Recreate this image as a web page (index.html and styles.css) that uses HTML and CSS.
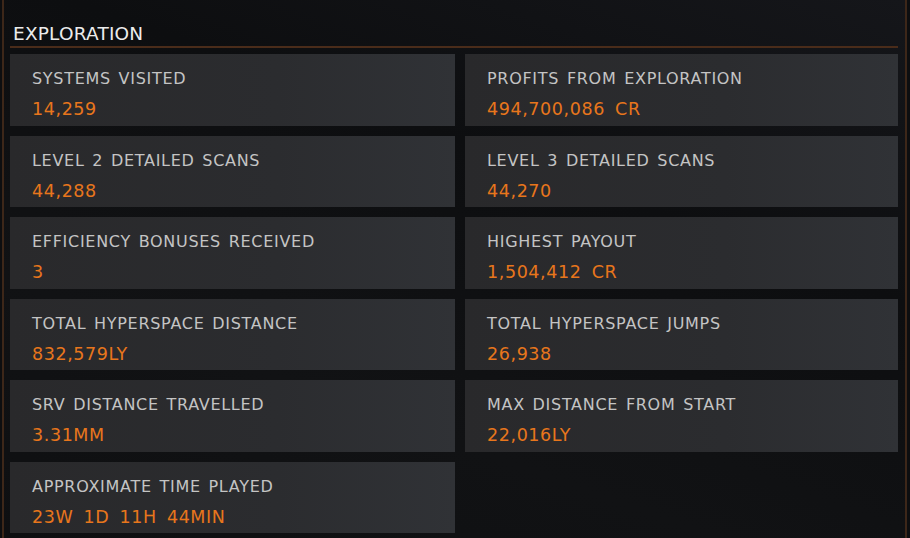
FILE: index.html
```html
<!DOCTYPE html>
<html>
<head>
<meta charset="utf-8">
<link rel="stylesheet" href="styles.css">
</head>
<body>
<div class="panel">
  <h2 class="title">EXPLORATION</h2>
  <div class="grid">
    <div class="card"><div class="label">SYSTEMS VISITED</div><div class="value">14,259</div></div>
    <div class="card"><div class="label">PROFITS FROM EXPLORATION</div><div class="value">494,700,086 CR</div></div>
    <div class="card"><div class="label">LEVEL 2 DETAILED SCANS</div><div class="value">44,288</div></div>
    <div class="card"><div class="label">LEVEL 3 DETAILED SCANS</div><div class="value">44,270</div></div>
    <div class="card"><div class="label">EFFICIENCY BONUSES RECEIVED</div><div class="value">3</div></div>
    <div class="card"><div class="label">HIGHEST PAYOUT</div><div class="value">1,504,412 CR</div></div>
    <div class="card"><div class="label">TOTAL HYPERSPACE DISTANCE</div><div class="value">832,579LY</div></div>
    <div class="card"><div class="label">TOTAL HYPERSPACE JUMPS</div><div class="value">26,938</div></div>
    <div class="card"><div class="label">SRV DISTANCE TRAVELLED</div><div class="value">3.31MM</div></div>
    <div class="card"><div class="label">MAX DISTANCE FROM START</div><div class="value">22,016LY</div></div>
    <div class="card"><div class="label">APPROXIMATE TIME PLAYED</div><div class="value">23W 1D 11H 44MIN</div></div>
  </div>
</div>
</body>
</html>
```
FILE: styles.css
```css
html, body {
  margin: 0;
  padding: 0;
  height: 100%;
  background: #0d0e10;
  overflow: hidden;
}
body {
  font-family: "DejaVu Sans", sans-serif;
}
.panel {
  box-sizing: border-box;
  height: 538px;
  margin: 0 3px 0 2px;
  padding: 0 7px 0 6px;
  border-left: 2px solid #3d2719;
  border-right: 2px solid #3d2719;
  background: linear-gradient(200deg, #15161a 0%, #0d0e10 35%, #111214 70%, #0e0f11 100%);
}
.title {
  margin: 0;
  padding: 23px 0 0 3px;
  height: 23px;
  font-size: 18.5px;
  font-weight: normal;
  color: #ececec;
  letter-spacing: 0.2px;
  border-bottom: 2px solid #4a2c1a;
}
.grid {
  display: grid;
  grid-template-columns: 445px 433px;
  grid-auto-rows: 71.5px;
  column-gap: 10px;
  row-gap: 10px;
  margin-top: 6px;
}
.card {
  background: linear-gradient(90deg, #29292b 0%, #2b2c2f 60%, #303236 100%);
  padding: 15px 0 0 22px;
  box-sizing: border-box;
}
.label {
  font-size: 16px;
  color: #c4c4c4;
  letter-spacing: 0.7px;
  word-spacing: 2px;
  line-height: 20px;
}
.value {
  margin-top: 10px;
  font-size: 17.5px;
  color: #e8761c;
  letter-spacing: 0.6px;
  word-spacing: 4px;
  line-height: 20px;
}
```
